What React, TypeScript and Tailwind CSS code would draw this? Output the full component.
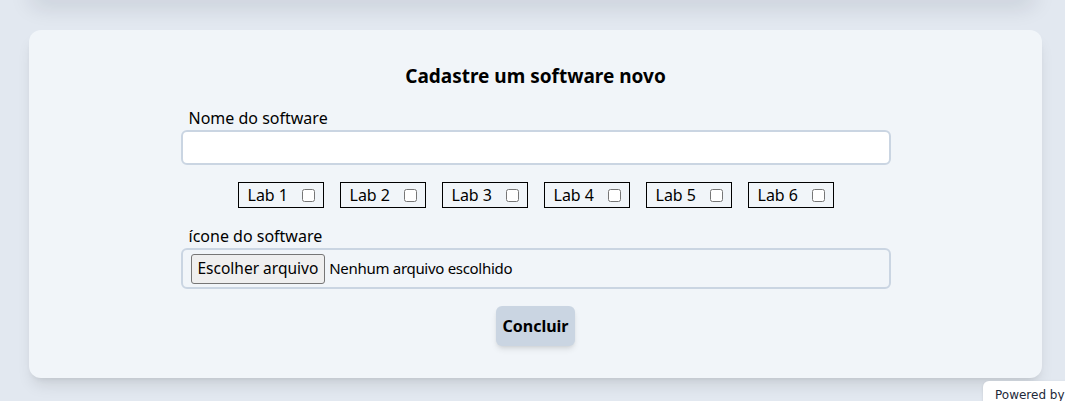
const labs = ["Lab 1", "Lab 2", "Lab 3", "Lab 4", "Lab 5", "Lab 6"];

export default function App() {
  return (
    <div
      className="relative min-h-screen overflow-hidden bg-slate-200 text-black"
      style={{ fontFamily: '"Noto Sans", "Open Sans", sans-serif' }}
    >
      {/* fim do card anterior, só a sombra aparece */}
      <div className="mx-[29px] -mt-4 h-4 rounded-b-xl bg-slate-100 shadow-[0_6px_22px_rgba(15,23,42,0.14)]" />

      <div className="mt-[30px] ml-[29px] w-[1013px] rounded-xl bg-slate-100 px-4 pt-8 pb-8 shadow-lg">
        <h1 className="text-center text-[19px] leading-7 font-bold">Cadastre um software novo</h1>

        <form className="mx-auto mt-4 flex w-[710px] flex-col" onSubmit={(e) => e.preventDefault()}>
          <label className="pl-2 text-base leading-6">Nome do software</label>
          <input
            type="text"
            className="h-[35px] w-full rounded-md border-2 border-slate-300 bg-white px-2 outline-none"
          />

          <div className="mt-[17px] flex justify-center gap-4">
            {labs.map((lab) => (
              <label
                key={lab}
                className="flex h-[26px] w-[86px] items-center justify-between border border-black pr-[8px] pl-[9px] text-base"
              >
                <span>{lab}</span>
                <input type="checkbox" className="m-0 h-[13px] w-[13px]" />
              </label>
            ))}
          </div>

          <label className="mt-4 pl-2 text-base leading-6">ícone do software</label>
          <div className="flex h-[41px] items-center rounded-md border-2 border-slate-300 bg-slate-100 pl-2">
            <button
              type="button"
              className="h-[30px] rounded-[3px] border border-[#767676] bg-[#efefef] px-[6px] text-[15.5px] leading-none"
            >
              Escolher arquivo
            </button>
            <span className="ml-1 text-[15px] tracking-[-0.3px]">Nenhum arquivo escolhido</span>
          </div>

          <div className="mt-[17px] flex justify-center">
            <button
              type="submit"
              className="h-10 rounded-md bg-slate-300 px-[6px] text-base font-bold shadow-md"
            >
              Concluir
            </button>
          </div>
        </form>
      </div>

      <div
        className="absolute top-[381px] left-[983px] h-8 w-[120px] rounded-tl-md bg-white pt-[6px] pl-3 text-[12px] leading-4 text-gray-800 shadow"
        style={{ fontFamily: '"DejaVu Sans", sans-serif' }}
      >
        Powered by
      </div>
    </div>
  );
}
